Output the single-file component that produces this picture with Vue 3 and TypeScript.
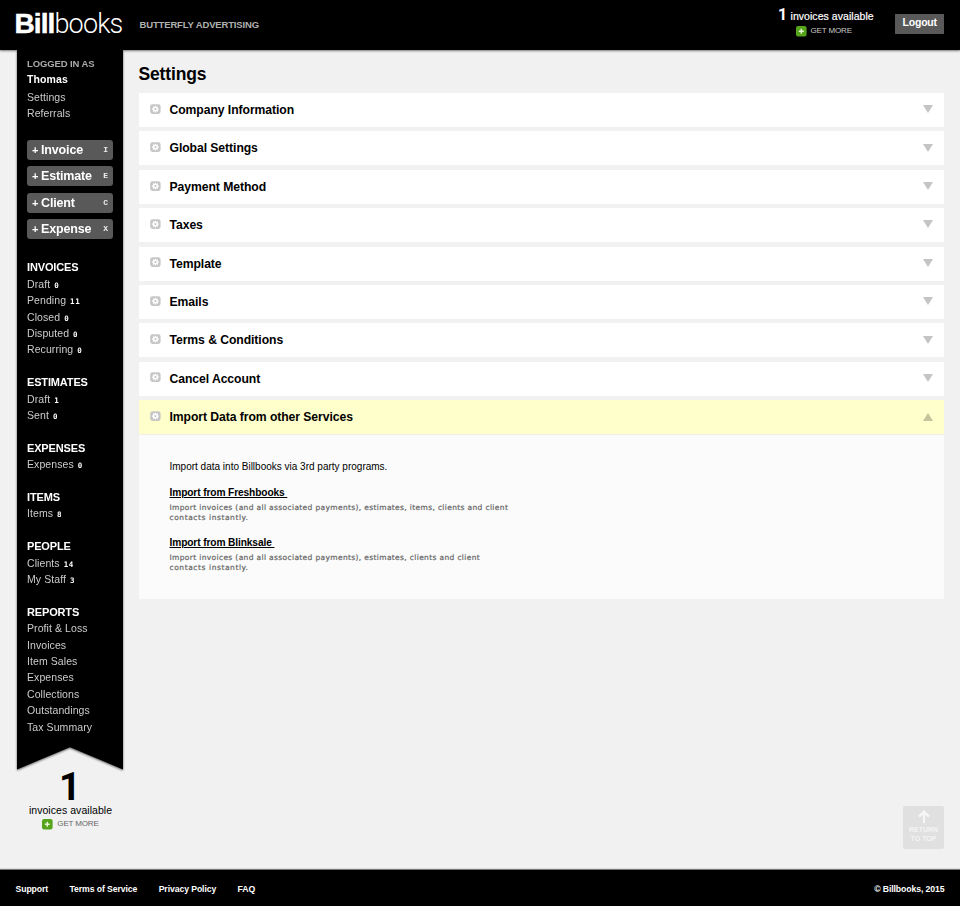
<script setup lang="ts">
import { ref } from 'vue'

interface NavItem { label: string; count?: number }
interface NavGroup { title: string; items: NavItem[] }

const actions = [
  { label: 'Invoice', key: 'I' },
  { label: 'Estimate', key: 'E' },
  { label: 'Client', key: 'C' },
  { label: 'Expense', key: 'X' },
]

const groups: NavGroup[] = [
  {
    title: 'INVOICES',
    items: [
      { label: 'Draft', count: 0 },
      { label: 'Pending', count: 11 },
      { label: 'Closed', count: 0 },
      { label: 'Disputed', count: 0 },
      { label: 'Recurring', count: 0 },
    ],
  },
  { title: 'ESTIMATES', items: [{ label: 'Draft', count: 1 }, { label: 'Sent', count: 0 }] },
  { title: 'EXPENSES', items: [{ label: 'Expenses', count: 0 }] },
  { title: 'ITEMS', items: [{ label: 'Items', count: 8 }] },
  { title: 'PEOPLE', items: [{ label: 'Clients', count: 14 }, { label: 'My Staff', count: 3 }] },
  {
    title: 'REPORTS',
    items: [
      { label: 'Profit & Loss' },
      { label: 'Invoices' },
      { label: 'Item Sales' },
      { label: 'Expenses' },
      { label: 'Collections' },
      { label: 'Outstandings' },
      { label: 'Tax Summary' },
    ],
  },
]

const sections = [
  'Company Information',
  'Global Settings',
  'Payment Method',
  'Taxes',
  'Template',
  'Emails',
  'Terms & Conditions',
  'Cancel Account',
  'Import Data from other Services',
]
const importIndex = sections.length - 1
const open = ref<number>(importIndex)

const sources = [
  {
    title: 'Import from Freshbooks',
    lines: ['Import invoices (and all associated payments), estimates, items, clients and client', 'contacts instantly.'],
  },
  {
    title: 'Import from Blinksale',
    lines: ['Import invoices (and all associated payments), estimates, clients and client', 'contacts instantly.'],
  },
]

const footerLinks = ['Support', 'Terms of Service', 'Privacy Policy', 'FAQ']
</script>

<template>
  <div class="page">
    <header class="topbar">
      <div class="logo"><b>Bill</b><span>books</span></div>
      <div class="company">BUTTERFLY ADVERTISING</div>
      <div class="credit">
        <div class="credit-line"><b>1</b><span>invoices available</span></div>
        <a class="more">
          <svg class="plus" viewBox="0 0 11 11"><rect width="10.6" height="10.6" rx="2" fill="#56a31c" /><path d="M5.3 2.8v5M2.8 5.3h5" stroke="#e6f6d4" stroke-width="1.4" /></svg>
          <span>GET MORE</span>
        </a>
      </div>
      <button class="logout">Logout</button>
    </header>

    <div class="body">
      <div class="left">
        <aside class="ribbon">
          <div class="side">
            <div class="logged">LOGGED IN AS</div>
            <div class="user">Thomas</div>
            <nav class="account">
              <a>Settings</a>
              <a>Referrals</a>
            </nav>
            <div class="actions">
              <button v-for="a in actions" :key="a.key" class="action">
                <i>+</i><span>{{ a.label }}</span><kbd>{{ a.key }}</kbd>
              </button>
            </div>
            <nav v-for="g in groups" :key="g.title" class="group">
              <h4>{{ g.title }}</h4>
              <a v-for="item in g.items" :key="item.label">{{ item.label }}<em v-if="item.count !== undefined">{{ item.count }}</em></a>
            </nav>
          </div>
          <svg class="tail" viewBox="0 0 106 23" preserveAspectRatio="none"><path d="M0 0H106V22.4L53 0.2L0 22.4Z" fill="#000" /></svg>
        </aside>
        <div class="remaining">
          <div class="big">1</div>
          <div class="avail">invoices available</div>
          <a class="more">
            <svg class="plus" viewBox="0 0 11 11"><rect width="10.6" height="10.6" rx="2" fill="#56a31c" /><path d="M5.3 2.8v5M2.8 5.3h5" stroke="#e6f6d4" stroke-width="1.4" /></svg>
            <span>GET MORE</span>
          </a>
        </div>
      </div>

      <main class="content">
        <h1>Settings</h1>
        <div class="accordion">
          <section v-for="(s, i) in sections" :key="s">
            <div class="row" :class="{ active: open === i }" @click="open = open === i ? -1 : i">
              <svg class="gear" viewBox="0 0 11 11">
                <rect x="0.2" y="0.2" width="10.4" height="9.8" rx="2.4" fill="#c6c6c6" />
                <path d="M5.4 1.7v6.8M2 5.1h6.8M3 2.7l4.8 4.8M3 7.5l4.8-4.8" stroke="#fff" stroke-width="1.1" />
                <circle cx="5.4" cy="5.1" r="2.5" fill="#fff" />
                <circle cx="5.4" cy="5.1" r="1.1" fill="#c6c6c6" />
              </svg>
              <h2>{{ s }}</h2>
              <svg class="arrow" viewBox="0 0 10 8"><path :d="open === i ? 'M0 8L5 0L10 8Z' : 'M0 0H10L5 8Z'" /></svg>
            </div>
            <div v-if="open === i && i === importIndex" class="panel">
              <p class="intro">Import data into Billbooks via 3rd party programs.</p>
              <div v-for="src in sources" :key="src.title" class="source">
                <a>{{ src.title }}&nbsp;</a>
                <p><span v-for="line in src.lines" :key="line">{{ line }}</span></p>
              </div>
            </div>
          </section>
        </div>
      </main>
    </div>

    <a class="top">
      <svg viewBox="0 0 12 13"><path d="M6 13V2M1 6.6L6 1.6L11 6.6" fill="none" stroke="#f6f6f6" stroke-width="2.3" /></svg>
      <span>RETURN</span>
      <span>TO TOP</span>
    </a>

    <footer class="footer">
      <nav><a v-for="f in footerLinks" :key="f">{{ f }}</a></nav>
      <div class="copy">© Billbooks, 2015</div>
    </footer>
  </div>
</template>

<style>
body { background: #f1f1f1; }
</style>

<style scoped>
.page {
  position: relative;
  display: flex;
  flex-direction: column;
  width: 960px;
  height: 906px;
  overflow: hidden;
  background: #f1f1f1;
  font-family: "Liberation Sans", Arial, sans-serif;
  color: #000;
}
h1, h2, h4, p { margin: 0; }
button { border: 0; margin: 0; padding: 0; font-family: inherit; text-align: left; }
.topbar {
  box-sizing: border-box;
  display: flex;
  flex: none;
  height: 50px;
  padding: 0 16px 0 14.5px;
  background: #000;
  box-shadow: 0 1px 2px rgba(0, 0, 0, 0.5);
}
.logo {
  display: flex;
  align-items: baseline;
  width: 125px;
  padding-top: 8px;
  color: #fff;
  font-size: 28px;
  line-height: 32px;
}
.logo b { letter-spacing: -0.9px; -webkit-text-stroke: 0.5px #fff; }
.logo span { font-family: Roboto, "Liberation Sans", sans-serif; font-size: 27px; font-weight: 300; letter-spacing: -0.85px; color: #fff; }
.company {
  flex: 1;
  padding-top: 19px;
  font-size: 9.5px;
  line-height: 12px;
  font-weight: bold;
  letter-spacing: -0.15px;
  color: #b0b0b0;
}
.credit { width: 116.5px; color: #fff; }
.credit-line { display: flex; align-items: baseline; padding-top: 5px; height: 20px; line-height: 20px; }
.credit-line b { width: 12.5px; font-family: Roboto, sans-serif; font-size: 16px; }
.credit-line span { font-size: 10.5px; letter-spacing: 0.05px; -webkit-text-stroke: 0.2px #fff; }
.more { display: flex; align-items: center; gap: 4px; font-size: 8px; line-height: 12px; letter-spacing: -0.15px; color: #ccc; }
.credit .more { padding-left: 17.5px; }
.plus { display: block; width: 11px; height: 11px; }
.logout {
  width: 49.5px;
  height: 19.5px;
  margin-top: 14px;
  padding: 0 0 2px 8px;
  background: #595959;
  color: #fff;
  font-size: 10.5px;
  line-height: 17px;
  font-weight: bold;
  letter-spacing: -0.2px;
}
.body { display: flex; flex: 1; padding-left: 17px; }
.left { width: 106px; }
.ribbon { filter: drop-shadow(0 1px 1.2px rgba(0, 0, 0, 0.6)); clip-path: inset(0 -10px -10px -10px); }
.side { box-sizing: border-box; height: 697px; padding: 7px 10.5px 0 10px; background: #000; }
.tail { display: block; width: 106px; height: 23px; }
.logged { font-size: 9.5px; line-height: 14px; font-weight: bold; letter-spacing: -0.12px; color: #aaa; }
.user { font-size: 10.5px; line-height: 16px; font-weight: bold; letter-spacing: 0.1px; color: #fff; }
.account { padding-top: 2px; }
.account a, .group a { display: block; font-size: 10.5px; line-height: 16.4px; letter-spacing: 0.08px; color: #ccc; }
.actions { display: grid; gap: 6.4px; padding: 18px 0 20.4px; }
.action {
  display: flex;
  align-items: center;
  width: 85.5px;
  height: 20px;
  padding: 0 4.5px 0 5px;
  border-radius: 3px;
  background: #595959;
  color: #fff;
  font-size: 12.5px;
  font-weight: bold;
  letter-spacing: -0.15px;
}
.action i { width: 9px; font-style: normal; font-size: 11px; }
.action span { flex: 1; }
.action kbd { font: bold 8px/10px "Liberation Mono", monospace; letter-spacing: 0; color: #eee; }
.group { padding-bottom: 16.4px; }
.group h4 { font-size: 11px; line-height: 16.4px; letter-spacing: -0.15px; color: #fff; }
.group em { margin-left: 4px; font: bold 7.5px/10px "DejaVu Sans Mono", monospace; letter-spacing: 0.6px; color: #fff; }
.remaining { text-align: center; }
.big { height: 33px; font-family: Roboto, sans-serif; font-size: 38px; line-height: 34px; font-weight: bold; }
.avail { font-size: 10.5px; line-height: 14px; letter-spacing: 0.05px; padding-left: 1px; }
.remaining .more { justify-content: center; margin-top: 1px; margin-left: 1px; color: #666; }
.content { width: 805.5px; padding: 14px 0 0 15.5px; }
h1 { height: 29px; font-size: 17.5px; line-height: 21px; letter-spacing: -0.15px; }
.accordion { display: grid; gap: 4.4px; }
.row {
  box-sizing: border-box;
  display: flex;
  align-items: center;
  height: 34px;
  padding: 0 11px 0 11px;
  background: #fff;
  cursor: pointer;
}
.row.active { height: 35px; background: #ffffcc; border-bottom: 1px solid #efefe4; }
.gear { width: 11px; height: 11px; margin: 0 9px 1.5px 0; }
h2 { flex: 1; font-size: 12.2px; line-height: 18px; letter-spacing: -0.07px; }
.arrow { width: 10px; height: 8px; margin-bottom: 1.5px; fill: #c4c4c4; }
.active .arrow { margin-bottom: 0; fill: #c4c49d; }
.panel { box-sizing: border-box; height: 164px; padding: 25px 31px 0; background: #fbfbfb; }
.intro { margin-bottom: 12px; font-size: 10px; line-height: 14px; }
.source { height: 50px; }
.source a { display: block; font-size: 10.2px; line-height: 14px; font-weight: bold; letter-spacing: -0.12px; text-decoration: underline; }
.source p { margin-top: 3px; font: 7.5px/10px "DejaVu Sans", sans-serif; color: #666; white-space: nowrap; -webkit-text-stroke: 0.2px #666; }
.source span { display: block; letter-spacing: 0.35px; }
.source span + span { letter-spacing: 0.57px; }
.top {
  position: absolute;
  left: 903px;
  top: 806px;
  display: flex;
  flex-direction: column;
  align-items: center;
  width: 41px;
  height: 43px;
  border-radius: 2px;
  background: #e0e0e0;
  color: #f4f4f4;
  font-size: 7px;
  line-height: 9px;
  font-weight: bold;
}
.top svg { width: 12px; height: 13px; margin: 4px 0 2px; }
.footer {
  box-sizing: border-box;
  display: flex;
  justify-content: space-between;
  height: 36px;
  padding: 13px 15.5px 0 15.5px;
  background: #000;
  box-shadow: 0 -1px 1px rgba(0, 0, 0, 0.5);
  color: #fff;
  font-size: 8.7px;
  line-height: 13px;
  font-weight: bold;
  letter-spacing: -0.1px;
}
.footer nav { display: flex; gap: 21.4px; }
</style>
